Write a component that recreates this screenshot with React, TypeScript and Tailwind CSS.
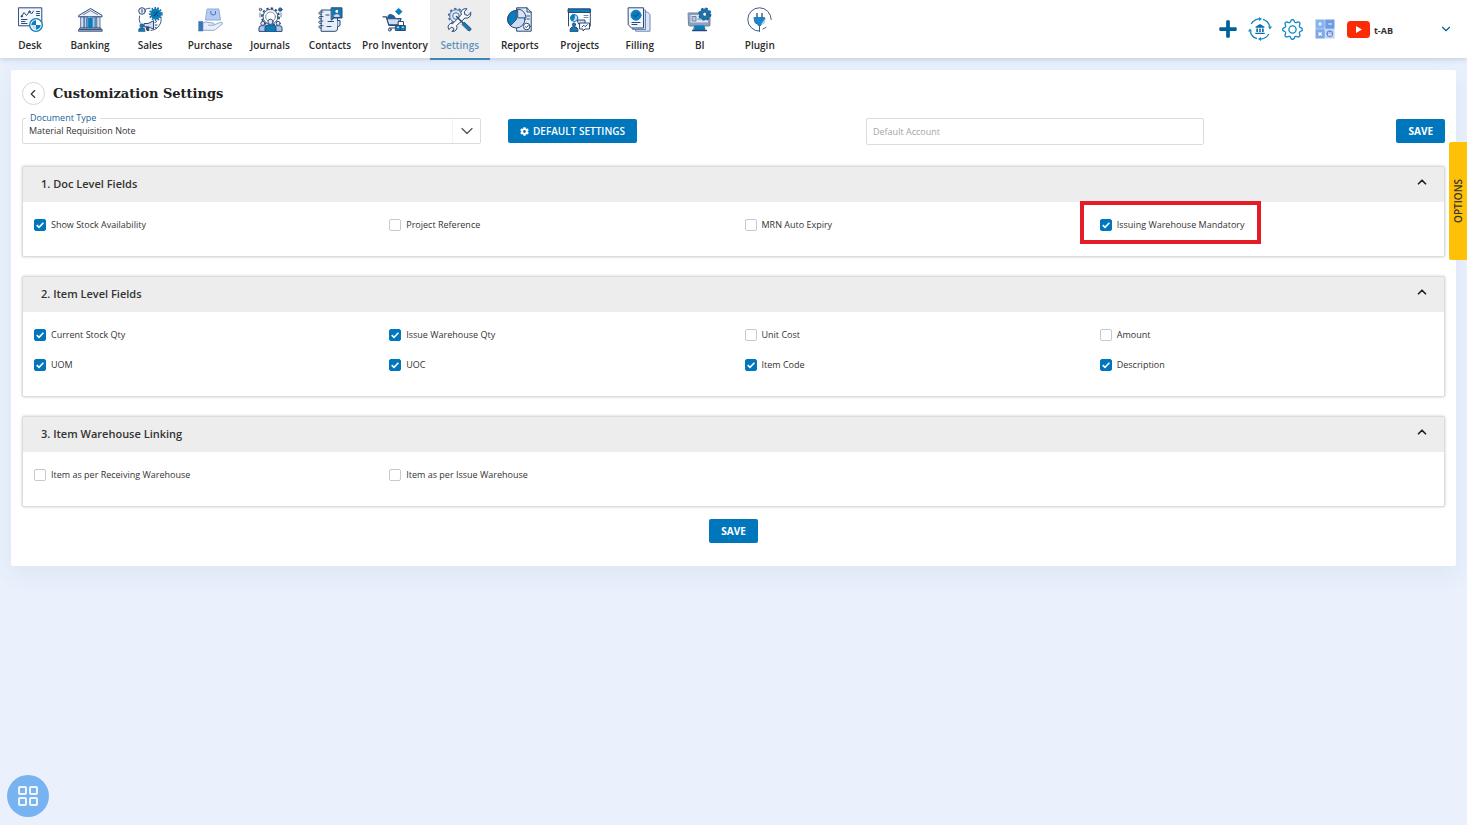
import { useState, type ReactNode } from "react"
import { ChevronDown, ChevronLeft, ChevronUp, LayoutGrid } from "lucide-react"
import { FaCog, FaPlus } from "react-icons/fa"
import { BsGear } from "react-icons/bs"

const NAVY = "#2b4a74"
const BLUE = "#0a7dbd"
const PALE = "#cfdcf5"

function Glyph({ children }: { children: ReactNode }) {
  return (
    <svg viewBox="0 0 25 25" width="25" height="25" fill="none" stroke={NAVY} strokeWidth="1" strokeLinecap="round" strokeLinejoin="round" aria-hidden="true">
      {children}
    </svg>
  )
}

const modules = [
  {
    name: "Desk",
    icon: (
      <Glyph>
        <rect x="0.8" y="0.8" width="23" height="18" fill="#f3f7fd" />
        <path d="M3.5 9.5 L6 5.5 L8.5 8.5 L11.5 4.5 L13.5 7 L15.5 4" />
        <circle cx="3.8" cy="9.3" r="0.7" fill={NAVY} />
        <circle cx="11.5" cy="4.6" r="0.7" fill={NAVY} />
        <path d="M18.5 4.5 H21.5 M18.5 6.5 H21.5 M18.5 8.5 H21.5 M3.5 12.5 H9 M3.5 14.5 H7 M3.5 16.5 H9" />
        <circle cx="18" cy="18" r="6.3" fill="#fff" stroke={BLUE} strokeWidth="1.3" />
        <path d="M18 18 V13.3 A4.7 4.7 0 0 0 13.3 18 Z M18 18 V22.7 A4.7 4.7 0 0 0 22.7 18 Z" fill={BLUE} stroke="none" />
        <path d="M18 18 H13.3 A4.7 4.7 0 0 0 18 22.7 Z" fill={PALE} stroke="none" />
      </Glyph>
    ),
  },
  {
    name: "Banking",
    icon: (
      <Glyph>
        <path d="M1 8.3 L12.5 1.5 L24 8.3 V9.8 H1 Z" fill="#eaf1fc" />
        <path d="M5.5 7.6 L12.5 3.6 L19.5 7.6" strokeWidth="0.7" />
        <path d="M3 10 H5.8 V21 H3 Z M7 10 H9.8 V21 H7 Z M15.2 10 H18 V21 H15.2 Z M19.2 10 H22 V21 H19.2 Z" fill={PALE} strokeWidth="0.7" />
        <path d="M11 11 H14 V20.5 H11 Z M8.7 11 V20.5 M17 11 V20.5" fill={BLUE} stroke={BLUE} />
        <path d="M2 21 H23 V22.6 H2 Z M0.8 22.6 H24.2 V24.3 H0.8 Z" fill="#a9b9d4" strokeWidth="0.8" />
      </Glyph>
    ),
  },
  {
    name: "Sales",
    icon: (
      <Glyph>
        <path d="M7.5 2.2 A11 11 0 0 1 12 1.2 M1.5 9 A11 11 0 0 0 2 16 M23.3 12 A11 11 0 0 1 13 23.5" strokeWidth="0.9" />
        <circle cx="4" cy="4" r="3.3" fill="#e5edfb" />
        <path d="M4 2.6 V5.3" />
        <circle cx="17.8" cy="7" r="5.4" fill={BLUE} stroke="none" />
        <circle cx="17.8" cy="7" r="6" stroke="#1c6ca3" strokeWidth="1.8" strokeDasharray="1.6 1.3" strokeLinecap="butt" />
        <path d="M16 8.8 L19.6 5.2 M16.2 5.5 H16.3 M19.4 8.5 H19.5" stroke="#113c63" strokeWidth="1.1" />
        <path d="M6.5 16.5 H10 L15.5 13.8 V22 L10 19.8 H6.5 Z" fill={PALE} />
        <path d="M8 20 L9 23.5 H11 L10.5 20" fill={NAVY} />
        <path d="M17 15.5 L18.5 14.7 M17.2 18 H19 M17 20.3 L18.5 21.2" />
        <circle cx="3.8" cy="18.7" r="1.9" fill={BLUE} strokeWidth="0.7" />
        <path d="M0.8 24.3 V22.7 Q0.8 21 2.5 21 H5.2 Q6.8 21 6.8 22.7 V24.3 Z" fill={BLUE} strokeWidth="0.8" />
      </Glyph>
    ),
  },
  {
    name: "Purchase",
    icon: (
      <Glyph>
        <path d="M9.5 2 H20.8 L22.5 13 H7.8 Z" fill="#b4cbf4" stroke="#8fa9d8" />
        <path d="M12.8 4.5 V6 Q12.8 8 15.2 8 Q17.5 8 17.5 6 V4.5" stroke="#4f6fa8" />
        <path d="M5 16 Q8 13.8 11 15.6 L15 16 Q17 16.4 16 18 L22.5 15.3 Q25 15 24.2 17 L17.5 22.5 Q16.5 23.3 15 23.3 H5 Z" fill="#e8effc" stroke="#93a7c9" />
        <path d="M15.5 18.2 H10.5" stroke="#93a7c9" />
        <path d="M0.8 14.5 H4.8 V24 H0.8 Z" fill="#3d74b8" stroke="#3d74b8" strokeWidth="0.6" />
      </Glyph>
    ),
  },
  {
    name: "Journals",
    icon: (
      <Glyph>
        <circle cx="12.5" cy="9.8" r="7.4" strokeWidth="0.9" />
        <circle cx="12.5" cy="9.8" r="8.6" strokeWidth="1.7" strokeDasharray="2.4 2.1" strokeLinecap="butt" />
        <circle cx="12.5" cy="9.8" r="4.8" strokeWidth="0.7" strokeDasharray="1.5 1" />
        <circle cx="2.5" cy="2.5" r="1.2" fill={PALE} />
        <circle cx="22.3" cy="2.6" r="1.7" fill={BLUE} />
        <path d="M2 6 V10 M23 6 V10" strokeWidth="0.7" />
        <path d="M1 24 V21 Q1 18.7 3.5 18.7 H6 Q8.5 18.7 8.5 21 V24 Z M16.5 24 V21 Q16.5 18.7 19 18.7 H21.5 Q24 18.7 24 21 V24 Z" fill="#a9c6ee" />
        <circle cx="4.8" cy="16.4" r="2" fill="#e3ecfa" />
        <circle cx="20.2" cy="16.4" r="2" fill="#e3ecfa" />
        <path d="M7 24.2 V21 Q7 18 10 18 H15 Q18 18 18 21 V24.2 Z" fill={BLUE} />
        <circle cx="12.5" cy="14.8" r="2.6" fill="#d9e6fa" />
      </Glyph>
    ),
  },
  {
    name: "Contacts",
    icon: (
      <Glyph>
        <path d="M3.5 3 H17 Q19.5 3 19.5 5.5 V22 Q19.5 24.3 17 24.3 H3.5 Z" fill="#e6eefb" />
        <path d="M19.5 13.5 H22 V18.5 L19.5 20" fill={PALE} />
        <path d="M5 5 H2 Q0.8 5 0.8 6.2 Q0.8 7.3 2 7.3 H3.5 M5 9.5 H2 Q0.8 9.5 0.8 10.7 Q0.8 11.8 2 11.8 H3.5 M5 14 H2 Q0.8 14 0.8 15.2 Q0.8 16.3 2 16.3 H3.5 M5 18.7 H2 Q0.8 18.7 0.8 19.9 Q0.8 21 2 21 H3.5" strokeWidth="0.9" />
        <path d="M8 8 H11 M10 14.5 H15.5 M9 19.5 H13" />
        <path d="M13.5 0.8 H24 V11 H16 L13.5 13 Z" fill={BLUE} />
        <circle cx="18.9" cy="4.3" r="1.9" fill="#fff" strokeWidth="0.6" />
        <path d="M15.3 10 Q15.3 6.7 18.9 6.7 Q22.3 6.7 22.3 10 Z" fill={PALE} strokeWidth="0.6" />
      </Glyph>
    ),
  },
  {
    name: "Pro Inventory",
    icon: (
      <Glyph>
        <path d="M16.8 1.6 L20 4.6 L16.8 7.8 L13.7 4.6 Z" fill={BLUE} stroke={BLUE} />
        <path d="M5.5 11 Q6 6.5 9.5 7.5 Q12.5 8.2 13.5 11 Z" fill="#1763a3" strokeWidth="0.6" />
        <path d="M1 9.8 H4.3 L7 18.5 H14 M5 11.5 H19 L18 14.5" strokeWidth="1.2" />
        <path d="M5.3 11.8 H17 V17.5 H7.2 Z" fill={PALE} strokeWidth="0.8" />
        <path d="M7.5 21 H15" />
        <circle cx="7.8" cy="22.7" r="1.4" fill={PALE} />
        <path d="M16.5 14.5 H21.5 V18.5 H16.5 Z" fill="#fff" />
        <path d="M13.8 18.5 H18.5 V23.5 H13.8 Z M18.5 18.5 H23.3 V23.5 H18.5 Z" fill={BLUE} />
        <path d="M15.5 20.2 H16.7 M20.3 20.2 H21.5" stroke="#fff" />
      </Glyph>
    ),
  },
  {
    name: "Settings",
    icon: (
      <Glyph>
        <circle cx="9" cy="9" r="6.3" fill="#dce8fa" stroke="#4a6da0" />
        <circle cx="9" cy="9" r="7.3" stroke="#4a6da0" strokeWidth="1.7" strokeDasharray="2.4 2.2" strokeLinecap="butt" />
        <circle cx="9" cy="9" r="3.3" fill="#f0f0f0" stroke="#4a6da0" />
        <path d="M23.8 5.7 L20.8 8.5 L17.8 7.6 L17.3 4.7 L20 1.8 Q16.8 1 14.8 3.3 Q13.2 5.4 14.3 8 L5.7 16.6 Q3 15.8 1.6 18 Q0.4 20.2 1.8 22.6 L4.2 20.3 L6.5 21 L7 23.2 L4.8 24.3 Q7.6 25 9.3 22.8 Q10.6 20.8 9.6 18.5 L18 11 Q20.5 11.8 22.5 10 Q24.3 8.2 23.8 5.7 Z" fill="#f7f9fc" />
        <path d="M9.5 9.5 L16 16" strokeWidth="1.5" />
        <path d="M15.2 17.2 L17.2 15.2 L23.7 21.3 Q24.4 22.2 23.4 23.3 Q22.3 24.3 21.3 23.5 Z" fill={BLUE} />
      </Glyph>
    ),
  },
  {
    name: "Reports",
    icon: (
      <Glyph>
        <path d="M10 0.8 H20 L24.2 5 V24.2 H10 Z" fill="#e2ebfa" />
        <path d="M20 0.8 V5 H24.2 M20 9 H22.3 M20 12 H22.3" />
        <circle cx="9.3" cy="12.3" r="8.7" fill={PALE} />
        <path d="M9.3 12.3 V3.6 A8.7 8.7 0 0 0 3.2 18.4 Z" fill={BLUE} />
        <path d="M10.7 10.5 V2 A8.6 8.6 0 0 1 19 10.5 Z" fill="#d7e3f8" />
        <circle cx="19.7" cy="19.5" r="3.3" fill="#fff" />
        <path d="M18.3 19.5 L19.3 20.6 L21.2 18.4" />
      </Glyph>
    ),
  },
  {
    name: "Projects",
    icon: (
      <Glyph>
        <path d="M1.5 2 H23.3 V19 M1.5 2 V19" />
        <path d="M1.5 2 H23.3 V5.5 H1.5 Z" fill={BLUE} />
        <circle cx="7.3" cy="11" r="3.5" fill={PALE} stroke={BLUE} />
        <path d="M7.3 11 V7.5 A3.5 3.5 0 0 0 5 13.8 Z" fill={BLUE} stroke={BLUE} />
        <path d="M17 8.5 H21 M17 10.5 H21" stroke="#6f8bb3" />
        <circle cx="7" cy="17.5" r="1.6" fill={BLUE} />
        <path d="M3 24 Q3 19.7 7 19.7 Q11 19.7 11 24 Z" fill={BLUE} />
        <path d="M10.5 13 H18 V17 H12 Z" fill={PALE} />
        <path d="M13 16 H22.5 V22 H18 L16 24 V22 H13 Z" fill="#fff" />
        <path d="M15 20 L16.8 18.2 L18.1 19.6 L20.3 17.7" />
      </Glyph>
    ),
  },
  {
    name: "Filling",
    icon: (
      <Glyph>
        <path d="M9 5 H20.5 L23 7.5 V24.2 H9 Z" fill="#dbe6f8" stroke="#6f87b0" />
        <path d="M6 3 H18.5 V22.5 H6 Z" fill={PALE} stroke="#6f87b0" />
        <path d="M1.5 0.8 H16.5 V21 H4.5 L1.5 18 Z" fill="#f1f6fd" />
        <circle cx="9" cy="8.2" r="5" fill={BLUE} stroke={BLUE} />
        <path d="M7 8.3 L8.5 9.8 L11.3 6.8" stroke="#0b3558" />
        <path d="M5 15.5 H13 M5 17.5 H10" />
      </Glyph>
    ),
  },
  {
    name: "BI",
    icon: (
      <Glyph>
        <path d="M1.5 6 H22 Q23 6 23 7 V18 Q23 19 22 19 H2.5 Q1.5 19 1.5 18 Z" fill="#8da0bb" stroke="#6d819f" />
        <path d="M3.5 8 H21 V15.5 H3.5 Z" fill="#dce6f5" stroke="none" />
        <path d="M5.5 9.5 H9 V14 H5.5 Z M11 12 H15" fill="#b9c9e2" stroke="#6d819f" />
        <path d="M8 19 H17 L18 22.5 H7 Z" fill={BLUE} stroke={BLUE} />
        <path d="M5.5 23.5 H19.5" strokeWidth="1.4" />
        <circle cx="17.8" cy="7.2" r="5.2" fill={BLUE} stroke="#245c8d" />
        <circle cx="17.8" cy="7.2" r="5.9" stroke="#245c8d" strokeWidth="1.4" strokeDasharray="2.6 2" strokeLinecap="butt" />
        <circle cx="17.8" cy="7.2" r="2.2" fill="#e4eefb" />
      </Glyph>
    ),
  },
  {
    name: "Plugin",
    icon: (
      <Glyph>
        <path d="M12.5 24.2 V19.5 M12.5 24.2 A11.7 11.7 0 1 1 24.2 12.5 M16 22 A11.2 11.2 0 0 0 19 20.3" strokeWidth="0.9" />
        <path d="M10 6.3 V10.5 M15 6.3 V10.5" strokeWidth="1.3" />
        <path d="M7.3 10.7 H17.7 V12.5 Q17.7 16.5 14.3 17.3 L12.5 19.5 L10.7 17.3 Q7.3 16.5 7.3 12.5 Z" fill="#1a86cf" stroke="#1a6eb0" />
        <path d="M15 17 L18 13" stroke="#d7e7fa" strokeWidth="1.2" />
      </Glyph>
    ),
  },
]

const sections = [
  {
    title: "1. Doc Level Fields",
    fields: [
      { label: "Show Stock Availability", on: true },
      { label: "Project Reference", on: false },
      { label: "MRN Auto Expiry", on: false },
      { label: "Issuing Warehouse Mandatory", on: true, highlight: true },
    ],
  },
  {
    title: "2. Item Level Fields",
    fields: [
      { label: "Current Stock Qty", on: true },
      { label: "Issue Warehouse Qty", on: true },
      { label: "Unit Cost", on: false },
      { label: "Amount", on: false },
      { label: "UOM", on: true },
      { label: "UOC", on: true },
      { label: "Item Code", on: true },
      { label: "Description", on: true },
    ],
  },
  {
    title: "3. Item Warehouse Linking",
    fields: [
      { label: "Item as per Receiving Warehouse", on: false },
      { label: "Item as per Issue Warehouse", on: false },
    ],
  },
]

function BankCycle() {
  return (
    <svg viewBox="0 0 24 24" width="24" height="24" fill="none" stroke="#0f86c6" strokeWidth="1.3" aria-hidden="true">
      <path d="M3.2 7 A10.2 10.2 0 0 1 11 1.9 M15 2.3 A10.2 10.2 0 0 1 21.8 9.5 M20.8 17 A10.2 10.2 0 0 1 13 22.1 M9 21.7 A10.2 10.2 0 0 1 2.2 14.5" />
      <path d="M11 0 L14 2 L11 4 Z M20 9.5 H24 L22 12.5 Z M13 20 L10 22 L13 24 Z M0 14.5 H4 L2 11.5 Z" fill="#0f86c6" stroke="none" />
      <path d="M7.5 9.7 L12 7 L16.5 9.7 V10.8 H7.5 Z M8.3 11.5 H10 V15 H8.3 Z M11.2 11.5 H12.8 V15 H11.2 Z M14 11.5 H15.7 V15 H14 Z M7.3 15.7 H16.7 V17 H7.3 Z" fill="#0b6cab" stroke="none" />
    </svg>
  )
}

function Calculator() {
  return (
    <svg viewBox="0 0 20 20" width="20" height="20" fill="none" stroke="#fff" strokeWidth="1.2" aria-hidden="true">
      <path d="M0.5 0.5 H9.8 V9.8 H0.5 Z" fill="#86b4ee" stroke="none" />
      <path d="M10.2 0.5 H19.5 V9.8 H10.2 Z" fill="#6f9de3" stroke="none" />
      <path d="M0.5 10.2 H9.8 V19.5 H0.5 Z" fill="#7ba8e8" stroke="none" />
      <path d="M10.2 10.2 H19.5 V19.5 H10.2 Z" fill="#b9d1f6" stroke="none" />
      <circle cx="14.8" cy="14.8" r="4" fill="#6690dc" stroke="#dfeafc" strokeWidth="0.8" />
      <path d="M5 3.3 V6.7 M3.3 5 H6.7 M13.3 5 H16.7 M3.5 13.3 L6.7 16.5 M6.7 13.3 L3.5 16.5 M13 14 H16.7 M13 15.9 H16.7" />
    </svg>
  )
}

function YouTube() {
  return (
    <svg viewBox="0 0 23 17" width="23" height="17" aria-hidden="true">
      <rect width="23" height="17" rx="3.5" fill="#fb2c05" />
      <path d="M9 5 L15 8.5 L9 12 Z" fill="#fff" />
    </svg>
  )
}

function Field({ label, on, highlight }: { label: string; on: boolean; highlight?: boolean }) {
  const [checked, setChecked] = useState(on)
  return (
    <div className="flex h-[30px] items-center pl-[11px]">
      <label className="relative flex items-center gap-[5px] text-[9px] leading-3 text-[#333]">
        <span className="relative flex h-3 w-3">
          <input
            type="checkbox"
            checked={checked}
            onChange={(e) => setChecked(e.target.checked)}
            className="h-3 w-3 appearance-none rounded-xs border border-[#c4cad0] bg-white checked:border-[#0077bd] checked:bg-[#0077bd]"
          />
          {checked && (
            <svg viewBox="0 0 12 12" className="pointer-events-none absolute inset-0 h-3 w-3" fill="none" stroke="#fff" strokeWidth="1.6" aria-hidden="true">
              <path d="M2.7 6.2 L5 8.4 L9.4 3.8" />
            </svg>
          )}
        </span>
        {label}
        {highlight && <span className="pointer-events-none absolute -left-5 -right-4 -top-[18px] -bottom-[13px] border-4 border-[#e31c25]" />}
      </label>
    </div>
  )
}

function Section({ title, fields }: (typeof sections)[number]) {
  const [open, setOpen] = useState(true)
  return (
    <section className="rounded-xs border border-[#dcdcdc] bg-white shadow-[0_0_3px_rgba(0,0,0,0.2)]">
      <button type="button" onClick={() => setOpen(!open)} className="flex h-[35px] w-full items-center justify-between bg-[#ededed] pl-[18px] pr-[15px]">
        <span className="text-[11px] font-semibold text-[#333]">{title}</span>
        <ChevronUp className="mb-1.5 h-3.5 w-3.5 text-[#222]" strokeWidth={3} />
      </button>
      {open && (
        <div className="grid grid-cols-4 pt-2 pb-4">
          {fields.map((field) => (
            <Field key={field.label} {...field} />
          ))}
        </div>
      )}
    </section>
  )
}

export default function App() {
  return (
    <div className="min-h-screen bg-[#eaf1fd] font-['Open_Sans',sans-serif] text-[#333]">
      <header className="relative flex h-[58px] justify-between bg-white shadow-[0_1px_6px_rgba(60,80,120,0.25)]">
        <nav className="flex">
          {modules.map(({ name, icon }) => (
            <a
              key={name}
              href="#"
              className={
                name === "Settings"
                  ? "flex h-[60px] min-w-[60px] flex-col items-center gap-1.5 border-b-2 border-[#3f86b8] bg-[#ededed] pt-[7px] text-[10px] font-semibold leading-[14px] text-[#5f93bd]"
                  : "flex h-[58px] min-w-[60px] flex-col items-center gap-1.5 px-0.5 pt-[7px] text-[10px] font-semibold leading-[14px] text-[#2b2b2b]"
              }
            >
              {icon}
              {name}
            </a>
          ))}
        </nav>
        <div className="flex items-center pr-3.5">
          <button type="button" aria-label="Add" className="text-[#00629b]">
            <FaPlus size={20} />
          </button>
          <button type="button" aria-label="Bank sync" className="ml-2.5">
            <BankCycle />
          </button>
          <button type="button" aria-label="Preferences" className="ml-2.5 text-[#1489c8]">
            <BsGear size={21} />
          </button>
          <button type="button" aria-label="Calculator" className="ml-3">
            <Calculator />
          </button>
          <button type="button" aria-label="Videos" className="ml-3">
            <YouTube />
          </button>
          <button type="button" className="ml-1 flex items-center gap-[46px] text-[9px] font-bold text-[#333]">
            <span className="pt-1">t-AB</span>
            <ChevronDown className="h-3.5 w-3.5 text-[#00629b]" />
          </button>
        </div>
      </header>

      <main className="mx-[11px] mt-3 rounded-xs bg-white px-[11px] pb-[23px] pt-3 shadow-[0_8px_24px_rgba(60,80,120,0.08)]">
        <div className="flex items-center gap-2">
          <button type="button" aria-label="Back" className="flex h-[23px] w-[23px] items-center justify-center rounded-full border border-[#d5d5d5] pr-0.5 text-[#333]">
            <ChevronLeft className="h-3.5 w-3.5" />
          </button>
          <h1 className="font-['DejaVu_Serif',serif] text-[13px] font-bold text-[#222]">Customization Settings</h1>
        </div>

        <div className="mt-[13px] grid grid-cols-[459fr_385fr_338fr_241fr] items-start">
          <div className="relative">
            <label htmlFor="document-type" className="absolute -top-[7px] left-1 bg-white px-1 text-[9px] leading-[14px] text-[#17649c]">
              Document Type
            </label>
            <select id="document-type" className="block h-[26px] w-full appearance-none rounded-xs border border-[#dcdcdc] bg-white pl-1.5 text-[9px] text-[#333]">
              <option>Material Requisition Note</option>
            </select>
            <span className="pointer-events-none absolute inset-y-px right-px flex w-7 items-center justify-center border-l border-[#f3f3f3]">
              <ChevronDown className="h-5 w-5 text-[#555]" strokeWidth={1.5} />
            </span>
          </div>
          <div className="pl-[27px] pt-px">
            <button type="button" className="flex h-6 items-center gap-1 rounded-xs bg-[#0077bd] px-3 text-[10px] font-semibold text-white">
              <FaCog size={9} />
              DEFAULT SETTINGS
            </button>
          </div>
          <input
            type="text"
            aria-label="Default Account"
            placeholder="Default Account"
            className="h-[27px] w-full rounded-xs border border-[#dcdcdc] bg-white px-1.5 text-[9px] placeholder:text-[#a5a5a5]"
          />
          <div className="flex justify-end pt-px">
            <button type="button" className="h-6 rounded-xs bg-[#0077bd] px-3 text-[10px] font-bold text-white">SAVE</button>
          </div>
        </div>

        <div className="mt-[21px] flex flex-col gap-[19px]">
          {sections.map((section) => (
            <Section key={section.title} {...section} />
          ))}
        </div>

        <div className="mt-3 flex justify-center">
          <button type="button" className="h-6 rounded-xs bg-[#0077bd] px-3 text-[10px] font-bold text-white">SAVE</button>
        </div>
      </main>

      {/* Side drawer handle */}
      <button type="button" className="fixed right-0 top-[142px] flex h-[118px] w-[18px] items-center justify-center rounded-l-xs bg-[#ffc107] text-[10px] font-semibold text-[#333]">
        <span className="rotate-180 [writing-mode:vertical-rl]">OPTIONS</span>
      </button>

      <button type="button" aria-label="Apps" className="fixed bottom-2 left-[7px] flex h-[42px] w-[42px] items-center justify-center rounded-full bg-[#77b3f1] text-[#eef5ff]">
        <LayoutGrid className="h-6 w-6" />
      </button>
    </div>
  )
}
